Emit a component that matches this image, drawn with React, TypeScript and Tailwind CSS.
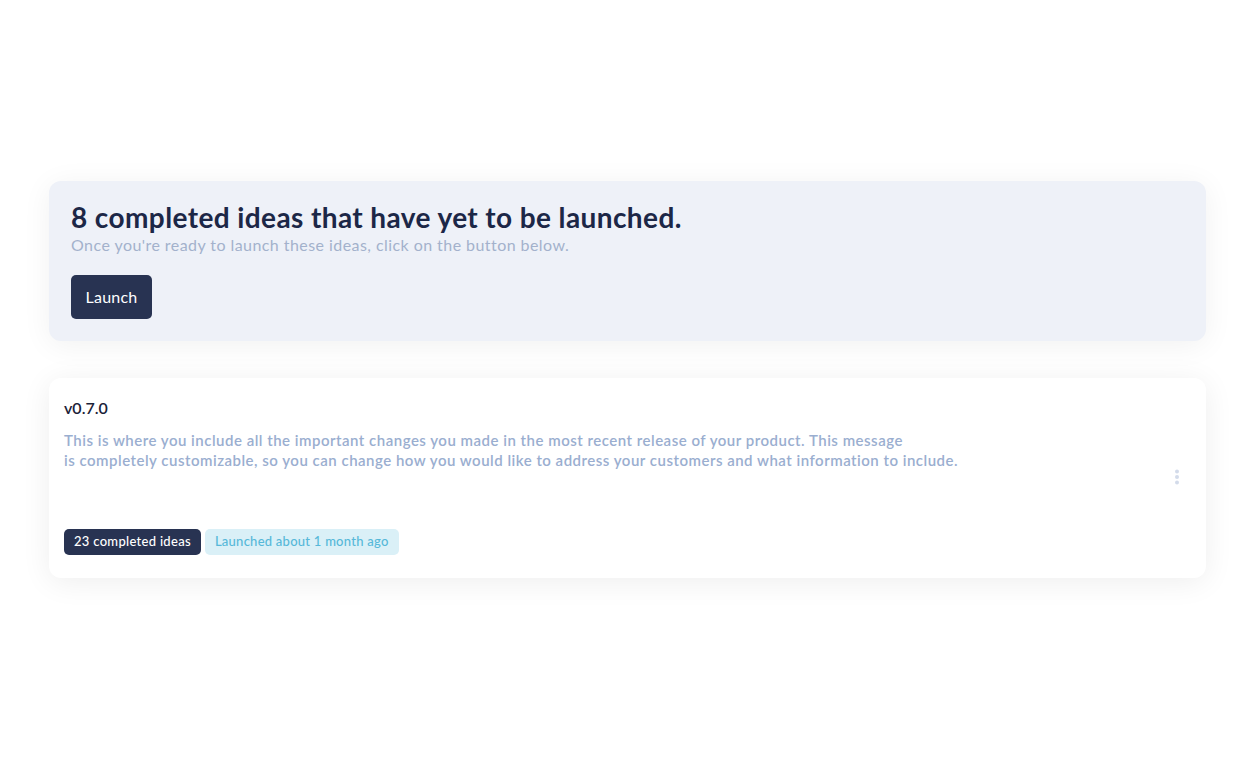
import React from "react";

export default function App() {
  return (
    <div className="min-h-[782px] w-full bg-white pt-[181px] pl-[49px] pr-[44px]" style={{ fontFamily: "Lato, 'Noto Sans', sans-serif" }}>
      <div className="rounded-[12px] bg-[#eef1f8] px-[22px] pt-[19px] pb-[22px] shadow-[0_4px_30px_rgba(0,0,0,0.06)]">
        <h1 className="text-[28px] font-bold leading-[34px] tracking-[0.4px] text-[#1c2747]">8 completed ideas that have yet to be launched.</h1>
        <p className="mt-[1px] text-[16px] leading-[20px] tracking-[0.44px] text-[#a3b1cc]">Once you're ready to launch these ideas, click on the button below.</p>
        <button className="mt-[20px] h-[44px] w-[81px] rounded-[5px] bg-[#283352] text-[16px] tracking-[0.2px] text-white">Launch</button>
      </div>
      <div className="mt-[37px] flex h-[200px] items-center rounded-[12px] bg-white pl-[15px] pr-[26px] shadow-[0_4px_30px_rgba(0,0,0,0.07)]">
        <div className="flex-1 self-stretch pt-[20px]">
          <div className="text-[16px] font-semibold leading-[20px] text-[#1a2238]">v0.7.0</div>
          <p className="mt-[12px] text-[15px] font-semibold leading-[20px] tracking-[0.5px] text-[#9aaed0]">
            This is where you include all the important changes you made in the most recent release of your product. This message
            <br />
            is completely customizable, so you can change how you would like to address your customers and what information to include.
          </p>
          <div className="mt-[59px] flex gap-[4px]">
            <span className="flex h-[26px] items-center rounded-[5px] bg-[#283352] px-[10px] text-[13px] font-medium tracking-[0.3px] text-white">23 completed ideas</span>
            <span className="flex h-[26px] items-center rounded-[5px] bg-[#daf0f7] px-[10px] text-[13px] font-medium tracking-[0.25px] text-[#56b8d9]">Launched about 1 month ago</span>
          </div>
        </div>
        <svg width="6" height="16" viewBox="0 0 6 16" className="mt-[-2px]">
          <circle cx="3" cy="2.5" r="2" fill="#d3dbea" />
          <circle cx="3" cy="8" r="2" fill="#d3dbea" />
          <circle cx="3" cy="13.5" r="2" fill="#d3dbea" />
        </svg>
      </div>
    </div>
  );
}
